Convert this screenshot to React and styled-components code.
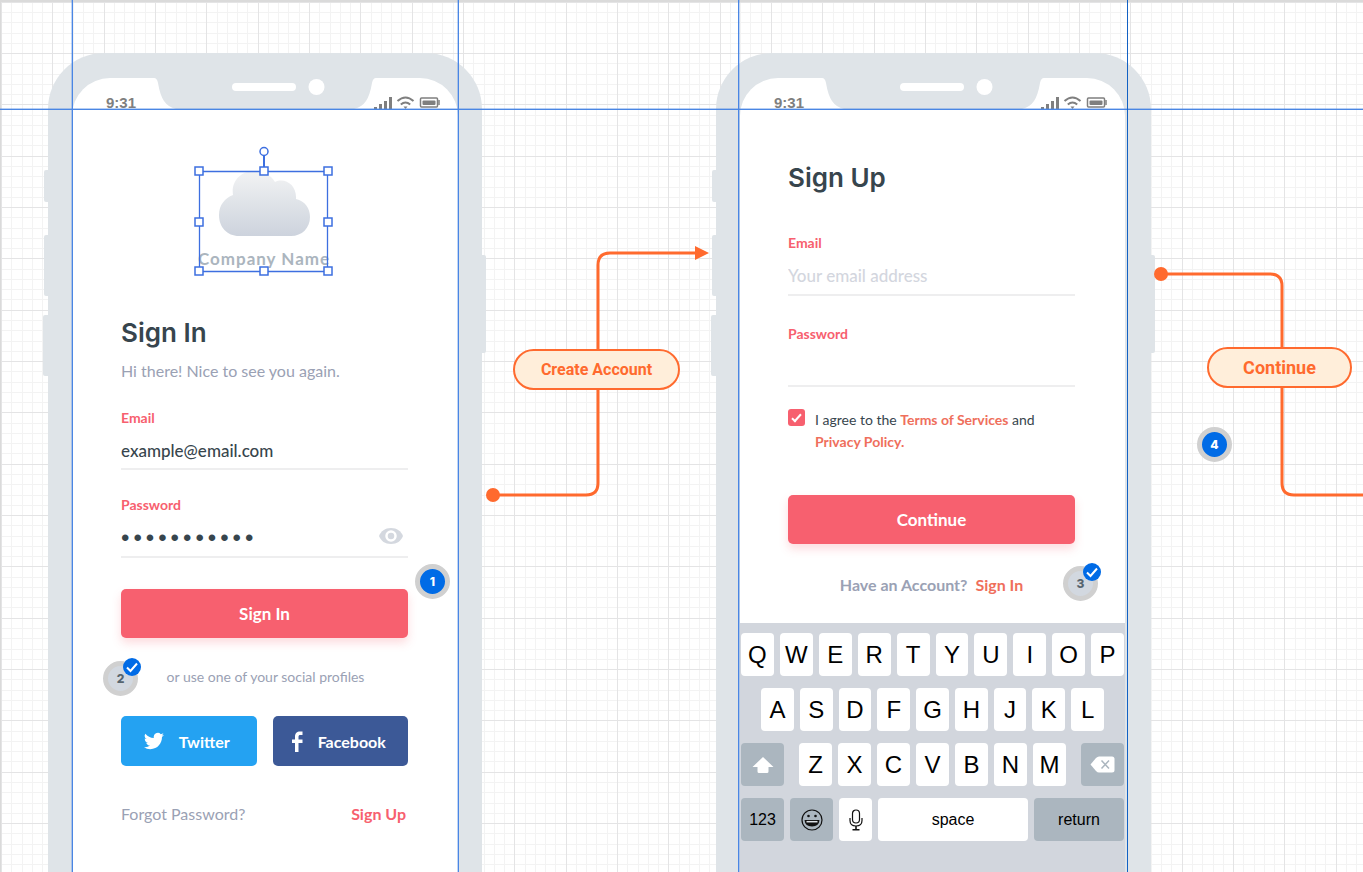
import React from "react";
import styled, { createGlobalStyle } from "styled-components";

const body = '"Lato", "Noto Sans", sans-serif';
const rounded = '"Inter", sans-serif';
const system = '"Liberation Sans", Arial, sans-serif';

const coral = "#f7606f";
const salmon = "#ef6f5c";
const slate = "#9aa1b4";
const ink = "#37454d";
const orange = "#ff6a2e";
const blue = "#006be6";

const GlobalStyle = createGlobalStyle`
  *, *::before, *::after { box-sizing: border-box; }
  body { margin: 0; background: #fff; font-family: ${body}; color: ${ink}; }
  button, input { font: inherit; color: inherit; margin: 0; }
  button { cursor: pointer; border: 0; padding: 0; }
  a { text-decoration: none; }
  h1, p { margin: 0; }
`;

const Canvas = styled.main`
  position: relative;
  min-height: 100vh;
  overflow: hidden;
`;

const Layer = styled.svg`
  position: absolute;
  top: 0;
  left: 0;
  width: 100%;
  height: 100%;
  overflow: visible;
  pointer-events: none;
`;

const Guide = styled.div`
  position: absolute;
  background: ${(p) => p.$color || "#4a86e4"};
  ${(p) =>
    p.$axis === "x"
      ? `left: 0; right: 0; height: 1px; top: ${p.$at}px; box-shadow: 0 -1px rgba(74, 134, 228, 0.4);`
      : `top: 0; bottom: 0; width: 1px; left: ${p.$at}px;`}
  ${(p) => p.$soft && `box-shadow: ${p.$soft}px 0 rgba(74, 134, 228, 0.35);`}
`;

/* ---------- phone ---------- */

const Phone = styled.section`
  position: absolute;
  top: 53px;
  bottom: 0;
  left: ${(p) => p.$left}px;
  width: ${(p) => p.$width}px;
  padding: 25px ${(p) => p.$right}px 0 24px;
  background: #dfe4e8;
  border-radius: 56px 56px 0 0;
  display: flex;
  flex-direction: column;
`;

const SideKey = styled.span`
  position: absolute;
  top: ${(p) => p.$top}px;
  height: ${(p) => p.$height}px;
  width: 8px;
  border-radius: 2px;
  background: #dfe4e8;
  ${(p) => p.$side}: -${(p) => p.$out}px;
`;

const Screen = styled.div`
  flex: 1;
  display: flex;
  flex-direction: column;
  background: #fff;
  border-radius: 38px 38px 0 0;
`;

const StatusBar = styled.div`
  height: 31px;
  flex: none;
  display: flex;
  justify-content: space-between;
  align-items: flex-start;
  padding: 15px 18px 0 34px;
  font: bold 15px/20px ${system};
  color: #7f7f7f;
`;

const StatusIcons = styled.svg`
  width: 67px;
  height: 16px;
  margin-top: 1px;
`;

const Notch = styled.svg`
  position: absolute;
  top: 24px;
  left: 106px;
  width: 222px;
  height: 33px;
`;

const Form = styled.form`
  display: flex;
  flex-direction: column;
  width: 287px;
  margin-left: ${(p) => p.$left}px;
  padding-top: ${(p) => p.$top}px;
`;

const Title = styled.h1`
  margin-bottom: ${(p) => p.$gap}px;
  font: 600 26px/32px ${rounded};
`;

const Lead = styled.p`
  margin-bottom: 26px;
  font-size: 16px;
  line-height: 22px;
  color: ${slate};
`;

const Field = styled.div`
  display: flex;
  flex-direction: column;
  height: ${(p) => p.$height}px;
  margin-bottom: ${(p) => p.$gap}px;
  border-bottom: 2px solid #eeeeef;
`;

const Label = styled.label`
  font-size: 14px;
  font-weight: bold;
  line-height: 20px;
  color: ${coral};
`;

const InputRow = styled.div`
  flex: 1;
  display: flex;
  align-items: center;
  padding: 4px 4px 0 0;
`;

const Input = styled.input`
  flex: 1;
  min-width: 0;
  height: 26px;
  padding: 0;
  border: 0;
  outline: 0;
  background: none;
  font-size: 17px;
  font-weight: 500;
  &::placeholder { color: #d3d6de; opacity: 1; }
`;

const SecretInput = styled(Input)`
  font: 24px/26px ${system};
  letter-spacing: 4px;
`;

const IconButton = styled.button`
  width: 26px;
  height: 22px;
  padding-bottom: 4px;
  background: none;
  svg { display: block; }
`;

const MainButton = styled.button`
  height: 49px;
  border-radius: 5px;
  background: ${coral};
  color: #fff;
  font-size: 17px;
  font-weight: bold;
  box-shadow: 0 5px 10px rgba(247, 96, 111, 0.22);
`;

const Divider = styled.p`
  margin: 29px 0;
  padding-left: 2px;
  text-align: center;
  font-size: 14px;
  line-height: 20px;
  color: ${slate};
`;

const SocialRow = styled.div`
  display: grid;
  grid-template-columns: 1fr 1fr;
  gap: 16px;
`;

const SocialButton = styled.button`
  display: flex;
  align-items: center;
  justify-content: center;
  gap: 15px;
  height: 50px;
  padding-right: 4px;
  border-radius: 5px;
  background: ${(p) => p.$color};
  color: #fff;
  font-size: 16px;
  font-weight: bold;
`;

const FooterLinks = styled.div`
  display: flex;
  justify-content: space-between;
  margin-top: 37px;
  padding-right: 2px;
  font-size: 16px;
  line-height: 22px;
`;

const Link = styled.a`
  color: ${(p) => p.$color};
  font-weight: ${(p) => (p.$strong ? "bold" : "normal")};
`;

const Consent = styled.div`
  display: flex;
  gap: 10px;
  margin-bottom: 42px;
  font-size: 14px;
  line-height: 22px;
`;

const Checkbox = styled.input`
  appearance: none;
  flex: none;
  width: 17px;
  height: 17px;
  border-radius: 3px;
  background: ${coral};
  display: grid;
  place-items: center;
  &:checked::after {
    content: "";
    width: 5px;
    height: 10px;
    margin-top: -2px;
    border: solid #fff;
    border-width: 0 2px 2px 0;
    transform: rotate(42deg);
  }
`;

const Account = styled.p`
  display: flex;
  justify-content: center;
  gap: 8px;
  margin-top: 30px;
  font-size: 16px;
  font-weight: bold;
  line-height: 22px;
  color: ${slate};
`;

/* ---------- selected logo ---------- */

const Selection = styled.div`
  position: relative;
  width: 130px;
  height: 100px;
  margin: 62px 0 0 127px;
  display: flex;
  flex-direction: column;
  align-items: center;
  justify-content: space-between;
`;

const CompanyName = styled.span`
  font-size: 17px;
  font-weight: bold;
  line-height: 24px;
  letter-spacing: 1px;
  color: #abb5be;
  white-space: nowrap;
`;

const Handles = styled.svg`
  position: absolute;
  top: -25px;
  left: -6px;
  width: 141px;
  height: 131px;
`;

/* ---------- keyboard ---------- */

const Keyboard = styled.div`
  flex: 1;
  display: flex;
  flex-direction: column;
  gap: 12px;
  margin-top: 27px;
  padding: 10px 1px 0;
  background: #d2d6dd;
`;

const KeyRow = styled.div`
  display: flex;
  gap: 6px;
  justify-content: space-between;
  padding: 0 ${(p) => p.$inset || 0}px;
`;

const KeyGroup = styled.div`
  display: flex;
  gap: 6px;
`;

const Key = styled.button`
  display: flex;
  align-items: center;
  justify-content: center;
  height: 43px;
  width: ${(p) => p.$width || 33}px;
  flex: ${(p) => (p.$grow ? "1 1 0" : "0 0 auto")};
  border-radius: 4px;
  background: ${(p) => (p.$dark ? "#abb6bf" : "#fff")};
  color: #000;
  font: ${(p) => (p.$word ? 16 : 24)}px/30px ${system};
`;

/* ---------- canvas notes ---------- */

const Pill = styled.div`
  position: absolute;
  top: ${(p) => p.$top}px;
  left: ${(p) => p.$left}px;
  width: ${(p) => p.$width}px;
  height: 41px;
  display: flex;
  align-items: center;
  justify-content: center;
  border: 2px solid ${orange};
  border-radius: 21px;
  background: #ffeeda;
  color: ${orange};
  font: bold ${(p) => p.$size}px/20px "Roboto", sans-serif;
`;

const Note = styled.div`
  position: absolute;
  top: ${(p) => p.$y - 18}px;
  left: ${(p) => p.$x - 18}px;
  width: 35px;
  height: 35px;
  display: grid;
  place-items: center;
  border: 5px solid #d0d0d0;
  border-radius: 50%;
  background: ${(p) => (p.$done ? "#d2d8e0" : blue)};
  color: ${(p) => (p.$done ? "#56646e" : "#fff")};
  font: 800 12px/16px ${rounded};
`;

const NoteTick = styled.svg`
  position: absolute;
  top: -8px;
  right: -8px;
  width: 18px;
  height: 18px;
`;

const STEP = 10.267;

function gridPath(major) {
  let d = "";
  for (let i = 0; i < 260; i++) {
    if ((i % 5 === 0) !== major) continue;
    const x = Math.round(1 + i * STEP);
    const y = Math.round(1.7 + i * STEP);
    d += `M${x} 0h1v2600h-1zM0 ${y}h2700v1H0z`;
  }
  return d;
}

function Grid() {
  return (
    <Layer shapeRendering="crispEdges" aria-hidden="true">
      <path d={gridPath(false)} fill="#f3f3f3" />
      <path d={gridPath(true)} fill="#e4e4e5" />
      <path d="M0 0H2700V2H1V2600H0Z" fill="#dadada" />
    </Layer>
  );
}

function Connectors() {
  return (
    <Layer aria-hidden="true" fill="none" stroke={orange} strokeWidth="3">
      <path d="M493 495H586Q598 495 598 483V265Q598 253 610 253H697" />
      <path d="M695 246L709 253L695 260Z" fill={orange} stroke="none" />
      <circle cx="493" cy="495" r="7" fill={orange} stroke="none" />
      <path d="M1161 274H1270Q1282 274 1282 286V483Q1282 495 1294 495H3000" />
      <circle cx="1161" cy="274" r="7" fill={orange} stroke="none" />
    </Layer>
  );
}

function PhoneShell({ left, width, right, children }) {
  return (
    <Phone $left={left} $width={width} $right={right}>
      <SideKey $side="left" $out={4} $top={117} $height={32} />
      <SideKey $side="left" $out={4} $top={182} $height={61} />
      <SideKey $side="left" $out={5} $top={262} $height={61} />
      <SideKey $side="right" $out={4} $top={202} $height={98} />
      <Screen>
        <StatusBar>
          <span>9:31</span>
          <StatusIcons viewBox="0 0 67 16" fill="none" stroke="#7f7f7f" aria-hidden="true">
            <g fill="#7f7f7f" stroke="none">
              <rect x="1" y="13" width="3" height="2" />
              <rect x="6" y="10" width="3" height="5" />
              <rect x="11" y="7" width="3" height="8" />
              <rect x="16" y="3" width="3" height="12" />
              <path d="M30.500 12.500h4l-2 2.500z" />
              <rect x="49.500" y="6.500" width="13" height="4.500" rx="1" />
            </g>
            <path d="M24.500 7Q32.500 0 40.500 7M27.800 10.500Q32.500 6.500 37.200 10.500" strokeWidth="2" />
            <rect x="47.500" y="4" width="17" height="9" rx="1" strokeWidth="1.500" />
            <path d="M66 6v5" strokeWidth="1.500" />
          </StatusIcons>
        </StatusBar>
        {children}
      </Screen>
      <Notch viewBox="0 0 222 33" aria-hidden="true">
        <path
          d="M0 0H222V1Q219 1 218 6Q216 18 212 24Q208 30 200 32H22Q14 30 10 24Q6 18 4 6Q3 1 0 1Z"
          fill="#dfe4e8"
        />
        <rect x="78" y="6" width="64" height="8" rx="4" fill="#fff" />
        <circle cx="162.500" cy="10" r="8" fill="#fff" />
      </Notch>
    </Phone>
  );
}

function Cloud() {
  return (
    <svg width="92" height="65" viewBox="0 0 92 65" role="img" aria-label="Cloud">
      <defs>
        <linearGradient id="cloud" x1="0" y1="0" x2="0" y2="1">
          <stop offset="0" stopColor="#f3f3f4" />
          <stop offset="0.5" stopColor="#dfe3e8" />
          <stop offset="1" stopColor="#cdd3dd" />
        </linearGradient>
      </defs>
      <path
        d="M21 65C9 65 1 56 1 44C1 34 7 27 15 24C13 10 23 0 36 0C45 0 53 4 57 11C67 6 79 14 78 28C87 30 92 37 92 46C92 57 84 65 73 65Z"
        fill="url(#cloud)"
      />
    </svg>
  );
}

function SelectedLogo() {
  const spots = [
    [6, 25], [71, 25], [135, 25], [6, 76], [135, 76], [6, 125], [71, 125], [135, 125],
  ];
  return (
    <Selection>
      <Cloud />
      <CompanyName>Company Name</CompanyName>
      <Handles viewBox="0 0 141 131" fill="none" stroke="#3d6fe0" aria-hidden="true">
        <path d="M6.500 25.500H134.500V125.500H6.500Z" strokeWidth="1.300" />
        <path d="M71 10V22" strokeWidth="2" />
        <circle cx="71" cy="5.500" r="4" fill="#fff" strokeWidth="1.500" />
        {spots.map(([x, y]) => (
          <rect key={`${x}-${y}`} x={x - 4} y={y - 4} width="8" height="8" fill="#fff" strokeWidth="1.500" />
        ))}
      </Handles>
    </Selection>
  );
}

function SignIn() {
  return (
    <PhoneShell left={48} width={434} right={24}>
      <SelectedLogo />
      <Form $top={46} $left={49} onSubmit={(e) => e.preventDefault()}>
        <Title $gap={11}>Sign In</Title>
        <Lead>Hi there! Nice to see you again.</Lead>
        <Field $height={62} $gap={25}>
          <Label htmlFor="in-email">Email</Label>
          <InputRow>
            <Input id="in-email" type="text" defaultValue="example@email.com" />
          </InputRow>
        </Field>
        <Field $height={63} $gap={31}>
          <Label htmlFor="in-password">Password</Label>
          <InputRow>
            <SecretInput id="in-password" type="password" defaultValue="elevenchars" />
            <IconButton type="button" aria-label="Show password">
              <svg width="26" height="18" viewBox="0 0 26 18">
                <path d="M13 1C7 1 3 4 1 9C3 14 7 17 13 17S23 14 25 9C23 4 19 1 13 1Z" fill="#d4d8df" />
                <circle cx="13" cy="9" r="4.500" fill="#d4d8df" stroke="#fff" strokeWidth="2.500" />
              </svg>
            </IconButton>
          </InputRow>
        </Field>
        <MainButton type="submit">Sign In</MainButton>
        <Divider>or use one of your social profiles</Divider>
        <SocialRow>
          <SocialButton type="button" $color="#24a2f2">
            <svg width="20" height="20" viewBox="0 0 24 24" fill="#fff" aria-hidden="true">
              <path d="M23.950 4.570a10 10 0 0 1-2.820.770 4.960 4.960 0 0 0 2.160-2.720 9.900 9.900 0 0 1-3.120 1.190 4.920 4.920 0 0 0-8.380 4.480C7.690 8.090 4.070 6.130 1.640 3.160a4.900 4.900 0 0 0 1.520 6.570 4.900 4.900 0 0 1-2.230-.610v.060a4.920 4.920 0 0 0 3.950 4.830 5 5 0 0 1-2.210.080 4.940 4.940 0 0 0 4.600 3.420A9.870 9.870 0 0 1 0 19.540a14 14 0 0 0 7.550 2.210c9.050 0 14-7.500 14-13.980 0-.210 0-.420-.020-.630a9.940 9.940 0 0 0 2.420-2.570z" />
            </svg>
            Twitter
          </SocialButton>
          <SocialButton type="button" $color="#3c5997">
            <svg width="12" height="21" viewBox="0 0 12 21" fill="#fff" aria-hidden="true">
              <path d="M4 21V12H1V8.500H4V6C4 2 6 .500 9 .500H11.500V4H9.500C8 4 7.500 4.600 7.500 6V8.500H11.500V12H7.500V21Z" />
            </svg>
            Facebook
          </SocialButton>
        </SocialRow>
        <FooterLinks>
          <Link href="#forgot" $color={slate}>Forgot Password?</Link>
          <Link href="#signup" $color={coral} $strong>Sign Up</Link>
        </FooterLinks>
      </Form>
    </PhoneShell>
  );
}

function LetterKeys({ letters, grow }) {
  return [...letters].map((c) => (
    <Key key={c} type="button" $grow={grow}>{c}</Key>
  ));
}

function SoftKeyboard() {
  return (
    <Keyboard>
      <KeyRow><LetterKeys letters="QWERTYUIOP" grow /></KeyRow>
      <KeyRow $inset={20}><LetterKeys letters="ASDFGHJKL" grow /></KeyRow>
      <KeyRow>
        <Key type="button" $dark $width={43} aria-label="Shift">
          <svg width="22" height="18" viewBox="0 0 22 18" fill="#fff">
            <path d="M11 1L21.500 11H16.500V15.500Q16.500 17 15 17H7Q5.500 17 5.500 15.500V11H.500Z" />
          </svg>
        </Key>
        <KeyGroup><LetterKeys letters="ZXCVBNM" /></KeyGroup>
        <Key type="button" $dark $width={43} aria-label="Delete">
          <svg width="25" height="17" viewBox="0 0 25 17">
            <path d="M.500 8.500L6 2Q7.500 .500 9 .500H22Q24.500 .500 24.500 3V14Q24.500 16.500 22 16.500H9Q7.500 16.500 6 15Z" fill="#fff" />
            <path d="M11.500 4.500L19 12.500M19 4.500L11.500 12.500" stroke="#abb6bf" strokeWidth="1.500" />
          </svg>
        </Key>
      </KeyRow>
      <KeyRow>
        <Key type="button" $dark $word $width={43}>123</Key>
        <Key type="button" $dark $width={43} aria-label="Emoji">
          <svg width="22" height="22" viewBox="0 0 22 22" fill="none" stroke="#111">
            <circle cx="11" cy="11" r="10" strokeWidth="1.200" />
            <path d="M3.500 11H18.500Q18 17.500 11 17.500T3.500 11Z" fill="#111" stroke="none" />
            <path d="M5.500 12.700H16.500" stroke="#dfe4e8" strokeWidth="1.500" />
            <circle cx="7.500" cy="7" r="1.300" fill="#111" stroke="none" />
            <circle cx="14.500" cy="7" r="1.300" fill="#111" stroke="none" />
          </svg>
        </Key>
        <Key type="button" aria-label="Dictate">
          <svg width="14" height="22" viewBox="0 0 14 22" fill="none" stroke="#111" strokeWidth="1.200">
            <rect x="3.500" y="1" width="7" height="13" rx="3.500" />
            <path d="M1 9V11.500Q1 17 7 17T13 11.500V9" />
            <path d="M7 17V20.500M3.500 20.800H10.500" strokeWidth="1.600" />
          </svg>
        </Key>
        <Key type="button" $word $grow>space</Key>
        <Key type="button" $dark $word $width={90}>return</Key>
      </KeyRow>
    </Keyboard>
  );
}

function SignUp() {
  return (
    <PhoneShell left={716} width={435} right={26}>
      <Form $top={53} $left={48} onSubmit={(e) => e.preventDefault()}>
        <Title $gap={39}>Sign Up</Title>
        <Field $height={63} $gap={28}>
          <Label htmlFor="up-email">Email</Label>
          <InputRow>
            <Input id="up-email" type="email" placeholder="Your email address" />
          </InputRow>
        </Field>
        <Field $height={63} $gap={22}>
          <Label htmlFor="up-password">Password</Label>
          <InputRow>
            <SecretInput id="up-password" type="password" />
          </InputRow>
        </Field>
        <Consent>
          <Checkbox id="agree" type="checkbox" defaultChecked />
          <label htmlFor="agree">
            I agree to the <Link href="#terms" $color={salmon} $strong>Terms of Services</Link> and
            <br />
            <Link href="#privacy" $color={salmon} $strong>Privacy Policy.</Link>
          </label>
        </Consent>
        <MainButton type="submit">Continue</MainButton>
        <Account>
          Have an Account?
          <Link href="#signin" $color={salmon} $strong>Sign In</Link>
        </Account>
      </Form>
      <SoftKeyboard />
    </PhoneShell>
  );
}

function Marker({ x, y, done, children }) {
  return (
    <Note $x={x} $y={y} $done={done}>
      {children}
      {done && (
        <NoteTick viewBox="0 0 18 18" fill="none" aria-hidden="true">
          <circle cx="9" cy="9" r="9" fill={blue} />
          <path d="M4 9.500L7.500 13L14 5.500" stroke="#fff" strokeWidth="2" />
        </NoteTick>
      )}
    </Note>
  );
}

export default function App() {
  return (
    <>
      <GlobalStyle />
      <Canvas>
        <Grid />
        <SignIn />
        <SignUp />
        <Connectors />
        <Pill $left={513} $top={349} $width={167} $size={16}>Create Account</Pill>
        <Pill $left={1207} $top={347} $width={145} $size={18}>Continue</Pill>
        <Guide $axis="x" $at={109} />
        <Guide $axis="y" $at={72} $soft={-1} />
        <Guide $axis="y" $at={458} $soft={-1} />
        <Guide $axis="y" $at={738} $soft={1} />
        <Guide $axis="y" $at={1127} $color="#1261c4" />
        <Marker x={433} y={582}>1</Marker>
        <Marker x={121} y={679} done>2</Marker>
        <Marker x={1081} y={584} done>3</Marker>
        <Marker x={1215} y={445}>4</Marker>
      </Canvas>
    </>
  );
}
